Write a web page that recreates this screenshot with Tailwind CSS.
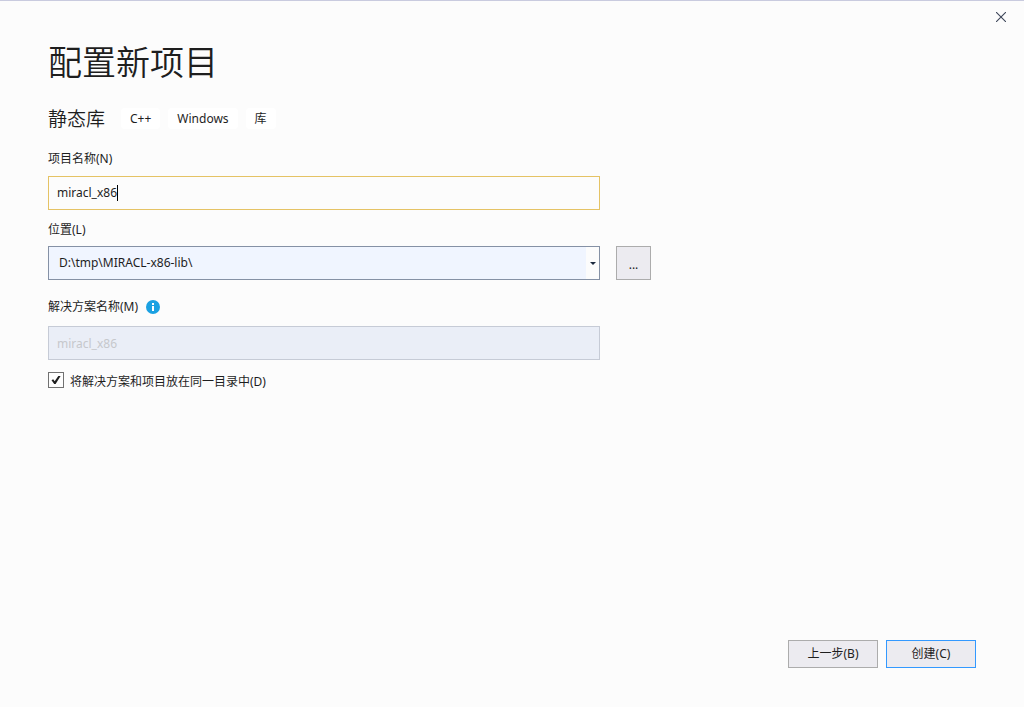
<!DOCTYPE html>
<html lang="zh-CN">
<head>
<meta charset="utf-8">
<meta name="viewport" content="width=device-width, initial-scale=1">
<title>配置新项目</title>
<script src="https://cdn.jsdelivr.net/npm/@tailwindcss/browser@4"></script>
</head>
<body class="flex min-h-screen flex-col border-t border-[#c9cbdf] bg-[#fcfcfc] font-['Noto_Sans','Noto_Sans_CJK_SC',sans-serif] text-xs text-[#1e1e1e]">
  <header class="flex h-8 shrink-0 justify-end pr-2">
    <button type="button" aria-label="关闭" class="flex w-[30px] items-center justify-center">
      <svg class="size-[10px]" viewBox="0 0 10 10" fill="none" stroke="#3d4659" stroke-width="1.1"><path d="M0 0L10 10M10 0L0 10"/></svg>
    </button>
  </header>
  <form class="flex grow flex-col px-12 pb-[39px]">
    <h1 class="mt-[3px] font-['Noto_Sans_CJK_SC',sans-serif] text-[34px] leading-[50px] font-[350]">配置新项目</h1>
    <div class="mt-4 flex h-8 items-center gap-2">
      <h2 class="mr-2 font-['Noto_Sans_CJK_SC',sans-serif] text-[19px] leading-8 font-[350]">静态库</h2>
      <span class="rounded-sm bg-white px-[9px] pt-px leading-5">C++</span>
      <span class="rounded-sm bg-white px-[9px] pt-px leading-5">Windows</span>
      <span class="rounded-sm bg-white px-[9px] pt-px leading-5">库</span>
    </div>

    <label for="name" class="mt-[15px] leading-5">项目名称(N)</label>
    <div class="mt-[7px] flex h-[34px] w-full max-w-[552px] items-center border border-[#e5c365] px-2">
      <input id="name" type="text" value="miracl_x86" class="field-sizing-content leading-5 outline-none">
      <span class="h-4 w-px bg-black"></span>
    </div>

    <label for="location" class="mt-2 leading-6">位置(L)</label>
    <div class="mt-1 flex gap-4">
      <div class="grid h-[34px] w-full max-w-[552px] border border-[#8591a5] bg-[#f0f5ff]">
        <select id="location" class="col-start-1 row-start-1 appearance-none bg-transparent px-[10px] pr-6 outline-none">
          <option>D:\tmp\MIRACL-x86-lib\</option>
        </select>
        <span class="pointer-events-none col-start-1 row-start-1 flex w-[13px] items-center justify-center justify-self-end bg-[#fcfcfc]">
          <svg class="h-[3px] w-[6px]" viewBox="0 0 6 3" fill="#1b293e"><path d="M0 0H6L3 3Z"/></svg>
        </span>
      </div>
      <button type="button" aria-label="浏览" class="h-[34px] w-[35px] shrink-0 border border-[#acacac] bg-[#ecebf0] pt-1">...</button>
    </div>

    <div class="mt-[15px] flex items-center gap-2">
      <label for="solution" class="leading-6">解决方案名称(M)</label>
      <svg class="size-[14px]" viewBox="0 0 14 14"><circle cx="7" cy="7" r="7" fill="#1ba1e2"/><path d="M6 3h2v2H6zM6 6h2v5H6z" fill="#fff"/></svg>
    </div>
    <input id="solution" type="text" value="miracl_x86" disabled class="mt-[7px] h-[34px] w-full max-w-[552px] border border-[#c6cbd6] bg-[#eaeef7] px-2 text-[#c6c8cc]">

    <div class="mt-3 flex items-start gap-[6px]">
      <span class="grid size-4 shrink-0">
        <input id="same" type="checkbox" checked class="peer col-start-1 row-start-1 size-4 appearance-none border border-[#717171] bg-[#fdfdfd]">
        <svg class="pointer-events-none invisible col-start-1 row-start-1 size-4 peer-checked:visible" viewBox="0 0 16 16" fill="#1e1e1e"><path d="M3.5 8.2L5.2 7.2L6.7 9.3L10.3 4H12.6L7.6 12H6.2Z"/></svg>
      </span>
      <label for="same" class="leading-5">将解决方案和项目放在同一目录中(D)</label>
    </div>

    <footer class="mt-auto flex justify-end gap-2">
      <button type="button" class="h-7 w-[90px] border border-[#acacac] bg-[#ecebf0]">上一步(B)</button>
      <button type="submit" class="h-7 w-[90px] border border-[#3399ff] bg-[#ecebf0]">创建(C)</button>
    </footer>
  </form>
</body>
</html>
